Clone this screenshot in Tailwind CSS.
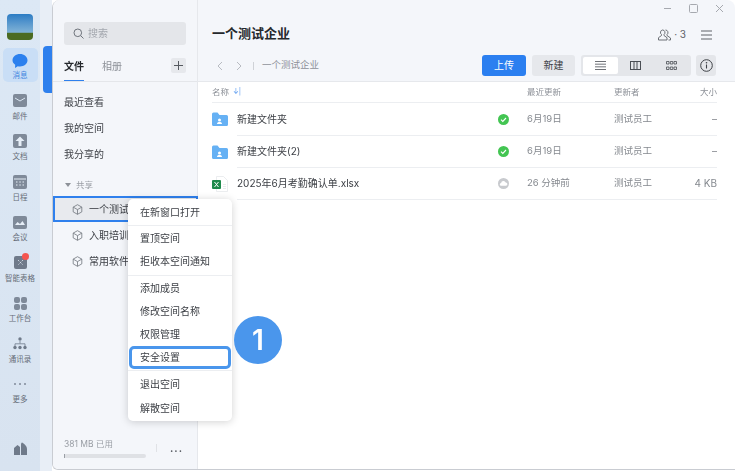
<!DOCTYPE html>
<html lang="zh">
<head>
    <meta charset="UTF-8">
    <title>一个测试企业</title>
    <script src="https://cdn.jsdelivr.net/npm/@tailwindcss/browser@4"></script>
</head>
<body class="w-[735px] h-[471px] overflow-hidden bg-white text-[#33363b] font-['Inter','Noto_Sans_CJK_SC',sans-serif]">
<div class="relative flex w-[735px] h-[471px] overflow-hidden blur-[0.3px]">

    <!-- left rail -->
    <div class="flex flex-col items-center w-[40px] h-full bg-gradient-to-b from-[#dce8f5] to-[#d8e3f0] shrink-0">
        <div class="mt-[14px] w-[26px] h-[26px] rounded-[4px] overflow-hidden bg-gradient-to-b from-[#2a7cc4] via-[#7fb2d6] via-70% to-[#4b6b22] to-75%"></div>
        <div class="mt-[8px] flex flex-col items-center w-[35px] h-[34px] rounded-[5px] bg-[#c9def6]">
            <svg class="mt-[5px]" width="16" height="16" viewBox="0 0 16 16"><path d="M8 1c4 0 7.500 2.700 7.500 6.300S12 13.500 8 13.500c-.8 0-1.500-.1-2.200-.3L3 15l.2-3.200C1.500 10.700.5 9.100.5 7.300.5 3.700 4 1 8 1z" fill="#2b80ee"/></svg>
            <span class="text-[7.500px] leading-[10px] mt-[2px] text-[#3f84e0]">消息</span>
        </div>
        <div class="mt-[12px] flex flex-col items-center h-[40.500px]">
            <div class="h-[13px] flex items-center"><svg width="14" height="13" viewBox="0 0 14 13"><rect width="14" height="13" rx="2" fill="#7f8a99"/><path d="M2 4l5 3 5-3" fill="none" stroke="#dbe7f3" stroke-width="1"/></svg></div>
            <span class="text-[7.500px] leading-[10px] mt-[4.500px] text-[#666d78]">邮件</span>
        </div>
        <div class="flex flex-col items-center h-[40.500px]">
            <div class="h-[13px] flex items-center"><svg width="14" height="14" viewBox="0 0 14 14"><rect width="14" height="14" rx="2" fill="#7f8a99"/><path d="M7 2.500L2.500 7h3v5h3V7h3z" fill="#e6eef7"/></svg></div>
            <span class="text-[7.500px] leading-[10px] mt-[4.500px] text-[#666d78]">文档</span>
        </div>
        <div class="flex flex-col items-center h-[40.500px]">
            <div class="h-[13px] flex items-center"><svg width="14" height="14" viewBox="0 0 14 14"><rect width="14" height="14" rx="2" fill="#7f8a99"/><path d="M1 4h12" stroke="#e6eef7"/><path d="M3 7h1.500M6.300 7h1.500M9.500 7H11M3 10h1.500M6.300 10h1.500M9.500 10H11" stroke="#e6eef7"/></svg></div>
            <span class="text-[7.500px] leading-[10px] mt-[4.500px] text-[#666d78]">日程</span>
        </div>
        <div class="flex flex-col items-center h-[40.500px]">
            <div class="h-[13px] flex items-center"><svg width="14" height="13" viewBox="0 0 14 13"><rect width="14" height="13" rx="2" fill="#7f8a99"/><path d="M2 9l2.500-3L7 8l2.500-3L12 9z" fill="#e6eef7"/></svg></div>
            <span class="text-[7.500px] leading-[10px] mt-[4.500px] text-[#666d78]">会议</span>
        </div>
        <div class="flex flex-col items-center h-[40.500px]">
            <div class="relative h-[13px] flex items-center">
                <svg width="13" height="13" viewBox="0 0 13 13"><rect width="13" height="13" rx="2" fill="#6f7a8a"/><path d="M4 4l5 5M9 4l-5 5" stroke="#dfe8f2" stroke-width=".8" stroke-dasharray="1.500 1"/></svg>
                <span class="w-[7px] h-[7px] rounded-full bg-[#f4554f] absolute top-[-3px] left-[8px]"></span>
            </div>
            <span class="text-[7.500px] leading-[10px] mt-[4.500px] whitespace-nowrap text-[#666d78]">智能表格</span>
        </div>
        <div class="flex flex-col items-center h-[40.500px]">
            <div class="grid grid-cols-2 gap-[1px] w-[13px] h-[13px]">
                <span class="rounded-[2px] bg-[#7f8a99]"></span><span class="rounded-[2px] bg-[#7f8a99]"></span>
                <span class="rounded-[2px] bg-[#7f8a99]"></span><span class="rounded-[2px] bg-[#7f8a99]"></span>
            </div>
            <span class="text-[7.500px] leading-[10px] mt-[4.500px] text-[#666d78]">工作台</span>
        </div>
        <div class="flex flex-col items-center h-[40.500px]">
            <svg width="14" height="13" viewBox="0 0 14 13"><circle cx="7" cy="2" r="1.700" fill="#6f7a8a"/><path d="M7 4v2.500M2 9V6.800h10V9" fill="none" stroke="#6f7a8a" stroke-width=".8"/><circle cx="2" cy="10.500" r="1.700" fill="#6f7a8a"/><circle cx="7" cy="10.500" r="1.700" fill="#6f7a8a"/><circle cx="12" cy="10.500" r="1.700" fill="#6f7a8a"/></svg>
            <span class="text-[7.500px] leading-[10px] mt-[4.500px] text-[#666d78]">通讯录</span>
        </div>
        <div class="flex flex-col items-center h-[30px]">
            <div class="h-[13px] flex items-center"><svg width="14" height="4" viewBox="0 0 14 4"><circle cx="2" cy="2" r="1" fill="#7f8a99"/><circle cx="7" cy="2" r="1" fill="#7f8a99"/><circle cx="12" cy="2" r="1" fill="#7f8a99"/></svg></div>
            <span class="text-[7.500px] leading-[10px] mt-[4.500px] text-[#666d78]">更多</span>
        </div>
        <svg class="mt-auto mb-[16px]" width="13" height="13" viewBox="0 0 13 13"><path d="M0 13V6l3.500-3L6 5v8zM7 13V2.500C7 1 8 .5 8 .5S13 3 13 7v6z" fill="#6f7a8a"/></svg>
    </div>

    <!-- collapsed tab strip -->
    <div class="w-[12px] h-full bg-[#e8eef6] shrink-0 pt-[46px] pl-[3px]">
        <div class="w-[9px] h-[47px] rounded-l-[4px] bg-[#2f80ed]"></div>
    </div>

    <!-- app window -->
    <div class="flex flex-1 h-[470px] rounded-tl-[8px] rounded-bl-[6px] rounded-tr-[8px] overflow-hidden border-l border-b border-[#c9ccd2] bg-white">

        <!-- sidebar -->
        <div class="flex flex-col w-[145px] h-full bg-[#f4f6fa] border-r border-[#e6e8ec] shrink-0">
            <div class="mt-[22px] mx-[11px] w-[122px] h-[23px] rounded-[3px] bg-[#e4e6ea] flex items-center pl-[9px] gap-[4px] shrink-0">
                <svg width="11" height="11" viewBox="0 0 11 11"><circle cx="4.800" cy="4.800" r="3.800" fill="none" stroke="#6f747c" stroke-width="1"/><path d="M7.700 7.700L10.500 10.500" stroke="#6f747c"/></svg>
                <span class="text-[10px] text-[#a3a7ae]">搜索</span>
            </div>
            <div class="flex items-start h-[37px] mt-0 pl-[11px] pr-[11px] border-b border-[#e4e6ea] shrink-0">
                <div class="flex flex-col mt-[13px]">
                    <span class="text-[10px] leading-[16px] font-bold text-[#25282c]">文件</span>
                    <span class="h-[1px] w-[20px] bg-[#2f80ed] mt-[6px]"></span>
                </div>
                <span class="ml-[18px] mt-[13px] text-[10px] leading-[16px] text-[#8d9198]">相册</span>
                <div class="ml-auto mt-[13px] w-[15px] h-[15px] rounded-[2px] bg-[#e6e8ec] flex items-center justify-center">
                    <svg width="9" height="9" viewBox="0 0 9 9"><path d="M4.500 0v9M0 4.500h9" stroke="#55595f"/></svg>
                </div>
            </div>
            <div class="pl-[11px] text-[10px] text-[#3d4046]">
                <div class="h-[26px] mt-[7px] flex items-center">最近查看</div>
                <div class="h-[26px] flex items-center">我的空间</div>
                <div class="h-[26px] flex items-center">我分享的</div>
            </div>
            <div class="mt-[7px] pl-[12px] h-[22px] flex items-center gap-[5px] text-[8.500px] text-[#9a9ea5]">
                <span class="w-0 h-0 border-x-[3px] border-x-transparent border-t-[4px] border-t-[#8d9198]"></span>共享
            </div>
            <div class="text-[10px] text-[#3d4046]">
                <div class="h-[26px] border-2 border-[#2f80ed] bg-[#e8eaee] flex items-center pl-[17px] gap-[6px] w-[145px] whitespace-nowrap overflow-hidden">
                    <svg width="11" height="11" viewBox="0 0 11 11"><path d="M5.500 .7l4.300 2.400v4.800l-4.300 2.400-4.300-2.400V3.100zM1.200 3.100l4.300 2.500 4.300-2.500M5.500 5.600v4.700" fill="none" stroke="#70757c" stroke-width=".8"/></svg>
                    一个测试企业
                </div>
                <div class="h-[26px] flex items-center pl-[19px] gap-[6px] whitespace-nowrap">
                    <svg width="11" height="11" viewBox="0 0 11 11"><path d="M5.500 .7l4.300 2.400v4.800l-4.300 2.400-4.300-2.400V3.100zM1.200 3.100l4.300 2.500 4.300-2.500M5.500 5.600v4.700" fill="none" stroke="#70757c" stroke-width=".8"/></svg>
                    入职培训
                </div>
                <div class="h-[26px] flex items-center pl-[19px] gap-[6px] whitespace-nowrap">
                    <svg width="11" height="11" viewBox="0 0 11 11"><path d="M5.500 .7l4.300 2.400v4.800l-4.300 2.400-4.300-2.400V3.100zM1.200 3.100l4.300 2.500 4.300-2.500M5.500 5.600v4.700" fill="none" stroke="#70757c" stroke-width=".8"/></svg>
                    常用软件
                </div>
            </div>
            <div class="mt-auto mb-[11px] pl-[11px] flex items-center">
                <div class="w-[82px]">
                    <div class="text-[8.500px] leading-[12px] text-[#9a9ea5]">381 MB 已用</div>
                    <div class="mt-[4px] h-[4px] rounded-full bg-[#dfe1e5]"><div class="w-[1px] h-full bg-[#9a9ea5]"></div></div>
                </div>
                <span class="ml-[10px] w-px h-[8px] bg-[#e0e2e6]"></span>
                <span class="ml-[13px] text-[10px] font-bold tracking-[1px] text-[#50545a]">...</span>
            </div>
        </div>

        <!-- main -->
        <div class="flex flex-col flex-1 h-full">
            <div class="h-[82px] bg-[#f4f6fa] border-b border-[#e6e8ec] shrink-0 pl-[14px] pr-[19px] relative">
                <div class="absolute top-[4px] right-[11px] flex items-center gap-[17px]">
                    <svg width="9" height="9" viewBox="0 0 9 9"><path d="M1 4.500h7" stroke="#a6a9af"/></svg>
                    <svg width="9" height="9" viewBox="0 0 9 9"><rect x=".5" y=".5" width="8" height="8" rx="1" fill="none" stroke="#a6a9af"/></svg>
                    <svg width="9" height="9" viewBox="0 0 9 9"><path d="M1 1l7 7M8 1L1 8" stroke="#a6a9af"/></svg>
                </div>
                <div class="absolute top-[27px] right-[23px] flex items-center">
                    <svg width="13" height="12" viewBox="0 0 13 12"><path d="M4.500 1a2.500 2.500 0 0 1 1.500 4.500v1l3 2.200V11H.5V8.700l3-2.200v-1A2.500 2.500 0 0 1 4.500 1zM7.500 1a2.500 2.500 0 0 1 1.500 4.500v1L12.500 9v2h-2" fill="none" stroke="#5f6369" stroke-width=".9"/></svg>
                    <span class="ml-[3px] text-[10px] text-[#5f6369]">· 3</span>
                    <svg class="ml-[15px]" width="11" height="10" viewBox="0 0 11 10"><path d="M0 1h11M0 5h11M0 9h11" stroke="#5f6369"/></svg>
                </div>
                <h1 class="pt-[24px] text-[13px] leading-[19px] font-bold text-[#25282c]">一个测试企业</h1>
                <div class="flex items-center mt-[12px] h-[21px]">
                    <svg width="6" height="10" viewBox="0 0 6 10" class="ml-[5px]"><path d="M5 1L1 5l4 4" fill="none" stroke="#b8bbc1"/></svg>
                    <svg width="6" height="10" viewBox="0 0 6 10" class="ml-[13px]"><path d="M1 1l4 4-4 4" fill="none" stroke="#b8bbc1"/></svg>
                    <span class="ml-[11px] w-px h-[8px] bg-[#cfd2d7]"></span>
                    <span class="ml-[8px] text-[9.500px] text-[#8d9198]">一个测试企业</span>
                    <div class="ml-auto w-[44px] h-[21px] rounded-[3px] bg-[#2b7ff0] text-white text-[10px] flex items-center justify-center">上传</div>
                    <div class="ml-[6px] w-[43px] h-[21px] rounded-[3px] bg-[#e6e8ec] text-[10px] text-[#3d4046] flex items-center justify-center">新建</div>
                    <div class="ml-[6px] w-[110px] h-[21px] rounded-[3px] bg-[#e4e6ea] flex items-center p-[2px]">
                        <div class="w-[35px] h-[17px] rounded-[2px] bg-white flex items-center justify-center">
                            <svg width="11" height="9" viewBox="0 0 11 9"><path d="M0 .5h11M0 3.170h11M0 5.830h11M0 8.500h11" stroke="#4a4e54" stroke-width=".8"/></svg>
                        </div>
                        <div class="w-[35px] flex items-center justify-center">
                            <svg width="11" height="9" viewBox="0 0 11 9"><rect x=".5" y=".5" width="10" height="8" fill="none" stroke="#4a4e54"/><path d="M4 .5v8M7 .5v8" stroke="#4a4e54"/></svg>
                        </div>
                        <div class="w-[36px] flex items-center justify-center">
                            <svg width="11" height="9" viewBox="0 0 11 9"><path d="M.5.500h2.500v2.500H.5zM4.300.500h2.500v2.500H4.300zM8 .5h2.500v2.500H8zM.5 6h2.500v2.500H.5zM4.300 6h2.500v2.500H4.300zM8 6h2.500v2.500H8z" fill="none" stroke="#4a4e54" stroke-width=".8"/></svg>
                        </div>
                    </div>
                    <div class="ml-[5px] w-[20px] h-[21px] rounded-[3px] bg-[#e4e6ea] flex items-center justify-center">
                        <svg width="13" height="13" viewBox="0 0 13 13"><circle cx="6.500" cy="6.500" r="5.800" fill="none" stroke="#3d4046"/><path d="M6.500 5.500v4" stroke="#3d4046" stroke-width="1.100"/><circle cx="6.500" cy="3.700" r=".8" fill="#3d4046"/></svg>
                    </div>
                </div>
            </div>

            <!-- file table -->
            <div class="pl-[14px] pr-[18px] text-[10px]">
                <div class="grid grid-cols-[286px_29px_87px_64px_1fr] h-[21px] items-center border-b border-[#eceef1] text-[8.500px] text-[#8d9198]">
                    <span class="flex items-center gap-[4px]">名称 <span class="text-[#5b9bf0] text-[7px]">↓|</span></span>
                    <span></span><span>最近更新</span><span>更新者</span><span class="text-right">大小</span>
                </div>
                <div class="grid grid-cols-[286px_29px_87px_64px_1fr] h-[32px] items-center">
                    <div class="flex items-center h-full">
                        <svg width="16" height="14" viewBox="0 0 16 14" class="mr-[9px] shrink-0"><path d="M0 2a1.500 1.500 0 0 1 1.500-1.500h4L7.500 3H14.500A1.500 1.500 0 0 1 16 4.500v8a1.500 1.500 0 0 1-1.500 1.500h-13A1.500 1.500 0 0 1 0 12.500z" fill="#66b1f4"/><circle cx="7.500" cy="8" r="1.500" fill="#fff"/><path d="M5 12c0-1.500 1-2 2.500-2s2.500.5 2.500 2z" fill="#fff"/></svg>
                        <span class="text-[#3d4046]">新建文件夹</span>
                    </div>
                    <svg width="11" height="11" viewBox="0 0 11 11"><circle cx="5.500" cy="5.500" r="5.500" fill="#43c552"/><path d="M3 5.700l1.800 1.700L8 4" fill="none" stroke="#fff" stroke-width="1.100"/></svg>
                    <span class="text-[9.500px] text-[#85898f]">6月19日</span>
                    <span class="text-[9.500px] text-[#85898f]">测试员工</span>
                    <span class="text-right text-[#85898f]">–</span>
                </div>
                <div class="ml-[25px] h-px bg-[#eceef1]"></div>
                <div class="grid grid-cols-[286px_29px_87px_64px_1fr] h-[31px] items-center">
                    <div class="flex items-center h-full">
                        <svg width="16" height="14" viewBox="0 0 16 14" class="mr-[9px] shrink-0"><path d="M0 2a1.500 1.500 0 0 1 1.500-1.500h4L7.500 3H14.500A1.500 1.500 0 0 1 16 4.500v8a1.500 1.500 0 0 1-1.500 1.500h-13A1.500 1.500 0 0 1 0 12.500z" fill="#66b1f4"/><circle cx="7.500" cy="8" r="1.500" fill="#fff"/><path d="M5 12c0-1.500 1-2 2.500-2s2.500.5 2.500 2z" fill="#fff"/></svg>
                        <span class="text-[#3d4046]">新建文件夹(2)</span>
                    </div>
                    <svg width="11" height="11" viewBox="0 0 11 11"><circle cx="5.500" cy="5.500" r="5.500" fill="#43c552"/><path d="M3 5.700l1.800 1.700L8 4" fill="none" stroke="#fff" stroke-width="1.100"/></svg>
                    <span class="text-[9.500px] text-[#85898f]">6月19日</span>
                    <span class="text-[9.500px] text-[#85898f]">测试员工</span>
                    <span class="text-right text-[#85898f]">–</span>
                </div>
                <div class="ml-[25px] h-px bg-[#eceef1]"></div>
                <div class="grid grid-cols-[286px_29px_87px_64px_1fr] h-[31px] items-center">
                    <div class="flex items-center h-full">
                        <svg width="16" height="16" viewBox="0 0 16 16" class="mr-[9px] shrink-0"><path d="M4.500.5h7l4 4v11h-11z" fill="#fff" stroke="#e3e5e8" stroke-width=".7"/><path d="M11 8.500h3M11 10.500h3M11 12.500h3" stroke="#dfe1e5" stroke-width=".7"/><rect y="4" width="9" height="9" rx="1" fill="#1f8a4c"/><path d="M2.500 6l4 5M6.500 6l-4 5" stroke="#fff" stroke-width="1"/></svg>
                        <span class="text-[#3d4046]">2025年6月考勤确认单.xlsx</span>
                    </div>
                    <svg width="11" height="11" viewBox="0 0 11 11"><circle cx="5.500" cy="5.500" r="5.500" fill="#c8cace"/><path d="M3.300 7.800a1.400 1.400 0 0 1-.2-2.800 2.400 2.400 0 0 1 4.600-.4 1.600 1.600 0 0 1 .2 3.200z" fill="#fff"/></svg>
                    <span class="text-[9.500px] text-[#85898f]">26 分钟前</span>
                    <span class="text-[9.500px] text-[#85898f]">测试员工</span>
                    <span class="text-right text-[#85898f]">4 KB</span>
                </div>
                <div class="ml-[25px] h-px bg-[#eceef1]"></div>
            </div>
        </div>
    </div>

    <!-- context menu -->
    <div class="absolute left-[128px] top-[199px] w-[104px] h-[222px] rounded-[5px] bg-white shadow-[0_1px_8px_rgba(0,0,0,0.18)] text-[10px] text-[#3d4046]">
        <div class="h-[26px] pl-[12px] flex items-center">在新窗口打开</div>
        <div class="h-px bg-[#eceef1]"></div>
        <div class="h-[23px] mt-[1px] pl-[12px] flex items-center">置顶空间</div>
        <div class="h-[23px] pl-[12px] flex items-center">拒收本空间通知</div>
        <div class="h-px mt-[2px] bg-[#eceef1]"></div>
        <div class="h-[23px] mt-[1px] pl-[12px] flex items-center">添加成员</div>
        <div class="h-[23px] pl-[12px] flex items-center">修改空间名称</div>
        <div class="h-[23px] pl-[12px] flex items-center">权限管理</div>
        <div class="h-[23px] mx-px pl-[8px] flex items-center border-[3px] border-[#4a96ec] rounded-[5px]">安全设置</div>
        <div class="h-px mt-px bg-[#eceef1]"></div>
        <div class="h-[26px] pl-[12px] flex items-center">退出空间</div>
        <div class="h-[23px] pl-[12px] flex items-center">解散空间</div>
    </div>

    <!-- step badge -->
    <div class="absolute left-[234px] top-[316px] w-[48px] h-[48px] rounded-full bg-[#4a96ec] text-white text-[28px] font-semibold flex items-center justify-center">1</div>
</div>
</body>
</html>
